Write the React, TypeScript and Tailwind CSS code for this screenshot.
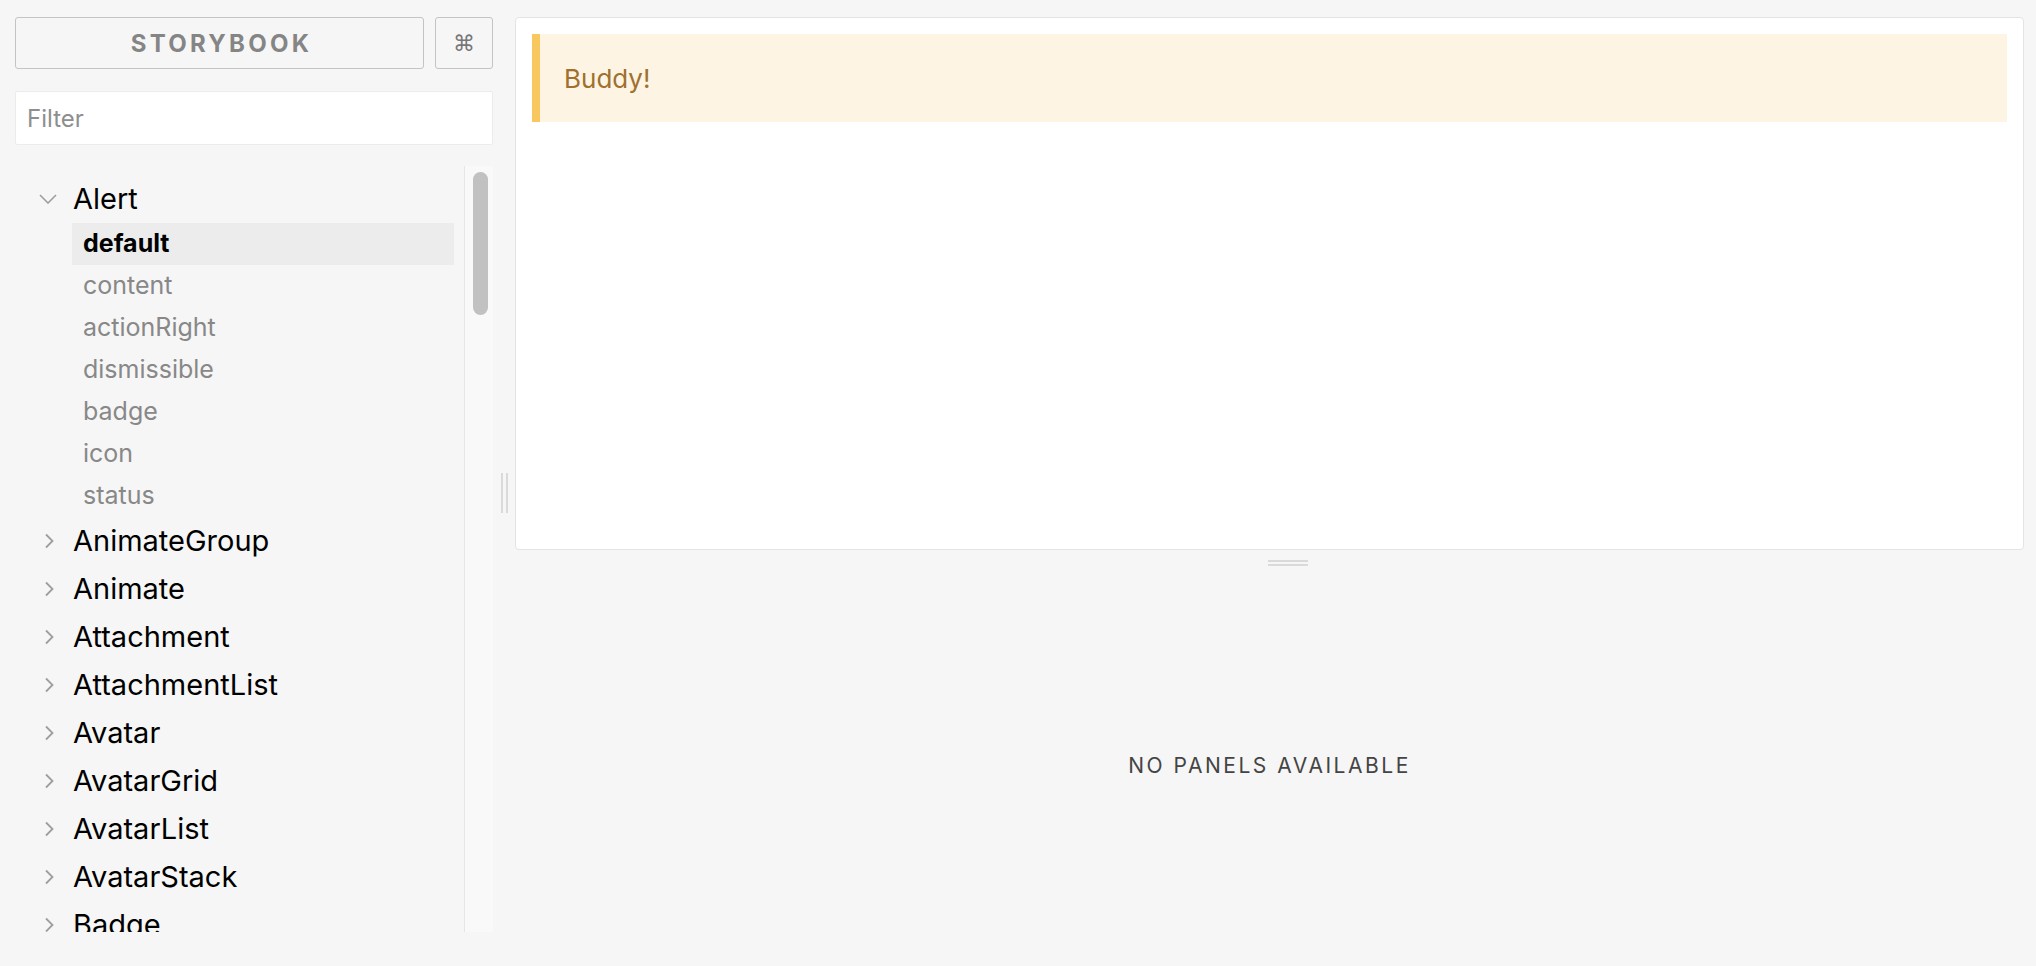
import React from "react";

const subs = ["default", "content", "actionRight", "dismissible", "badge", "icon", "status"];
const tops = ["AnimateGroup", "Animate", "Attachment", "AttachmentList", "Avatar", "AvatarGrid", "AvatarList", "AvatarStack", "Badge"];

function ChevronRight() {
  return (
    <svg width="12" height="16" viewBox="0 0 12 16" fill="none">
      <path d="M3 1.5 L9.5 8 L3 14.5" stroke="#9e9e9e" strokeWidth="1.8" />
    </svg>
  );
}

function ChevronDown() {
  return (
    <svg width="18" height="10" viewBox="0 0 18 10" fill="none">
      <path d="M1 1 L9 9 L17 1" stroke="#9e9e9e" strokeWidth="1.6" />
    </svg>
  );
}

export default function App() {
  const font = { fontFamily: "Inter, 'Noto Sans', sans-serif" };
  return (
    <div className="flex h-[966px] w-[2036px] overflow-hidden bg-[#f6f6f6]" style={font}>
      {/* Sidebar */}
      <div className="flex w-[493px] shrink-0 flex-col pl-[15px] pt-[17px]">
        <div className="flex h-[52px] gap-[11px]">
          <div className="flex w-[409px] items-center justify-center rounded-[3px] border border-[#c4c4c4] pl-[4px] pt-[2px] text-[24px] font-bold tracking-[0.135em] text-[#858585]">
            STORYBOOK
          </div>
          <div className="flex w-[58px] items-center justify-center rounded-[3px] border border-[#c4c4c4] text-[22px] text-[#777]" style={{ fontFamily: "'DejaVu Sans', sans-serif" }}>
            ⌘
          </div>
        </div>
        <div className="mt-[22px] flex h-[54px] items-center rounded-[2px] border border-[#ececec] bg-white pl-[11px] pt-[2px] text-[24px] text-[#8e8e8e]">
          Filter
        </div>
        <div className="mt-[21px] flex h-[766px] overflow-hidden">
          <div className="flex-1 overflow-hidden pt-[9px]">
            <div className="flex h-[48px] items-center">
              <div className="flex w-[58px] justify-end pr-[16px]">
                <ChevronDown />
              </div>
              <span className="text-[29px] text-black">Alert</span>
            </div>
            <div className="pr-[10px]">
              {subs.map((s, i) => (
                <div
                  key={s}
                  className={
                    i === 0
                      ? "ml-[57px] flex h-[42px] items-center bg-[#ececec] pl-[11px] text-[25px] font-bold text-black"
                      : "ml-[57px] flex h-[42px] items-center pl-[11px] text-[25px] text-[#888]"
                  }
                >
                  {s}
                </div>
              ))}
            </div>
            {tops.map((t) => (
              <div key={t} className="flex h-[48px] items-center">
                <div className="flex w-[58px] justify-start pl-[28px]">
                  <ChevronRight />
                </div>
                <span className="text-[29px] text-black">{t}</span>
              </div>
            ))}
          </div>
          <div className="w-[29px] shrink-0 border-l border-[#e6e6e6] bg-[#f9f9f9] pl-[8px] pt-[6px]">
            <div className="h-[143px] w-[15px] rounded-full bg-[#c1c1c1]" />
          </div>
        </div>
      </div>
      {/* Vertical resize handle */}
      <div className="flex w-[22px] shrink-0 flex-col pt-[473px]">
        <div className="ml-[8px] flex h-[40px] gap-[3px]">
          <div className="w-[2px] bg-[#dadada]" />
          <div className="w-[2px] bg-[#dadada]" />
        </div>
      </div>
      {/* Right pane */}
      <div className="flex w-[1509px] shrink-0 flex-col pt-[17px]">
        <div className="h-[533px] rounded-[4px] border border-[#e4e4e4] bg-white px-[16px] pt-[16px]">
          <div className="flex h-[88px] items-center border-l-[8px] border-[#f8c75f] bg-[#fdf4e3] pl-[24px] text-[26px] text-[#a0702e]">
            Buddy!
          </div>
        </div>
        <div className="flex h-[16px] flex-col items-start pl-[753px] pt-[10px]">
          <div className="h-[2px] w-[40px] bg-[#dadada]" />
          <div className="mt-[2px] h-[2px] w-[40px] bg-[#dadada]" />
        </div>
        <div className="flex flex-1 items-center justify-center text-[21px] tracking-[0.12em] text-[#444]">
          NO PANELS AVAILABLE
        </div>
      </div>
    </div>
  );
}
